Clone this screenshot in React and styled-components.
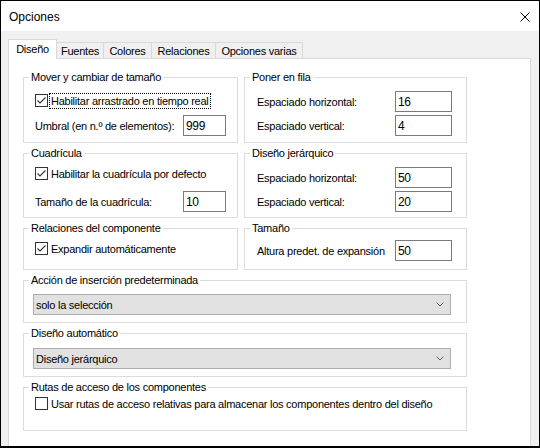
import React from "react";
import styled, { createGlobalStyle } from "styled-components";

const Global = createGlobalStyle`
  html, body { margin: 0; padding: 0; background: #ffffff; }
  body { font-family: "Liberation Sans", Arial, sans-serif; }
  * { box-sizing: border-box; }
`;

const Window = styled.div`
  width: 540px;
  height: 448px;
  border: 1px solid #000;
  border-bottom-width: 2px;
  display: flex;
  flex-direction: column;
  overflow: hidden;
  background: #f0f0f0;
  font-family: "Liberation Sans", Arial, sans-serif;
  font-size: 11px;
  letter-spacing: -0.25px;
  color: #000;
`;

const TitleBar = styled.div`
  height: 30px;
  flex: none;
  background: #fff;
  display: flex;
  align-items: center;
  justify-content: space-between;
  padding: 0 9px 0 8px;
`;

const Title = styled.span`
  font-size: 12px;
  letter-spacing: 0;
  padding-top: 1px;
`;

const CloseBtn = styled.span`
  width: 10px;
  height: 10px;
  display: flex;
  margin-top: 2px;
`;

const Body = styled.div`
  flex: 1;
  display: flex;
  flex-direction: column;
  padding: 8px 8px 0 7px;
  min-height: 0;
`;

const TabStrip = styled.div`
  display: flex;
  align-items: flex-end;
  height: 19px;
  flex: none;
`;

const Tab = styled.div`
  position: relative;
  width: ${(p) => p.$w}px;
  height: ${(p) => (p.$active ? 20 : 16)}px;
  margin-bottom: ${(p) => (p.$active ? -1 : 0)}px;
  z-index: ${(p) => (p.$active ? 1 : 0)};
  background: ${(p) => (p.$active ? "#fff" : "#f0f0f0")};
  border: 1px solid #d9d9d9;
  border-bottom: none;
  border-left: ${(p) => (p.$active ? "1px solid #d9d9d9" : "none")};
  display: flex;
  align-items: ${(p) => (p.$active ? "flex-start" : "center")};
  padding-top: ${(p) => (p.$active ? 3 : 0)}px;
  justify-content: center;
  white-space: nowrap;
`;

const Panel = styled.div`
  flex: 1;
  background: #fff;
  border: 1px solid #d9d9d9;
  border-bottom: none;
  padding: 12px 0 0 14px;
  display: flex;
  flex-direction: column;
  gap: 4px;
`;

const TwoCol = styled.div`
  display: grid;
  grid-template-columns: 215px 223px;
  grid-template-rows: 72px 71px 48px;
  column-gap: 6px;
  row-gap: 4px;
`;

const Group = styled.fieldset`
  margin: 0;
  padding: 0;
  min-width: 0;
  width: ${(p) => (p.$w ? `${p.$w}px` : "auto")};
  height: ${(p) => (p.$h ? `${p.$h}px` : "auto")};
  border: 1px solid #dcdcdc;
`;

const Legend = styled.legend`
  margin-left: 5px;
  padding: 0 2px;
  line-height: 13px;
  font-size: 11px;
`;

const Content = styled.div`
  display: flex;
  flex-direction: column;
  gap: ${(p) => p.$gap ?? 3}px;
  padding: ${(p) => p.$pt}px ${(p) => p.$pr}px 0 ${(p) => p.$pl}px;
`;

const FieldRow = styled.div`
  display: flex;
  align-items: center;
  justify-content: space-between;
  height: ${(p) => p.$h ?? 21}px;
`;

const Label = styled.span`
  white-space: nowrap;
`;

const TextBox = styled.div`
  width: ${(p) => p.$w}px;
  height: ${(p) => p.$h ?? 21}px;
  border: 1px solid #7a7a7a;
  background: #fff;
  padding: 0 2px;
  display: flex;
  align-items: center;
  font-size: 12px;
  letter-spacing: -0.3px;
`;

const CheckRow = styled.label`
  display: flex;
  align-items: center;
  gap: 2px;
  height: 13px;
  white-space: nowrap;
`;

const Box = styled.span`
  width: 13px;
  height: 13px;
  flex: none;
  border: 1px solid #333;
  background: #fff;
  display: flex;
  align-items: center;
  justify-content: center;
`;

const CheckText = styled.span`
  padding: 1px 1px;
  outline: ${(p) => (p.$focus ? "1px dotted #000" : "none")};
  outline-offset: 0;
`;

const Select = styled.div`
  height: ${(p) => p.$h ?? 21}px;
  width: 418px;
  background: #e1e1e1;
  border: 1px solid #adadad;
  display: flex;
  align-items: center;
  justify-content: space-between;
  padding: 0 6px 0 2px;
  font-size: 11px;
`;

const Check = ({ checked, focus, children }) => (
  <CheckRow>
    <Box>
      {checked && (
        <svg width="11" height="11" viewBox="0 0 11 11">
          <polyline points="1.5,5.5 4,8 9.5,2.5" fill="none" stroke="#333" strokeWidth="1.1" />
        </svg>
      )}
    </Box>
    <CheckText $focus={focus}>{children}</CheckText>
  </CheckRow>
);

const Chevron = () => (
  <svg width="8" height="5" viewBox="0 0 8 5">
    <polyline points="0.5,0.5 4,4 7.5,0.5" fill="none" stroke="#606060" strokeWidth="1" />
  </svg>
);

const tabs = [
  { t: "Diseño", w: 49, active: true },
  { t: "Fuentes", w: 47 },
  { t: "Colores", w: 48 },
  { t: "Relaciones", w: 64 },
  { t: "Opciones varias", w: 87 },
];

export default function App() {
  return (
    <>
      <Global />
      <Window>
        <TitleBar>
          <Title>Opciones</Title>
          <CloseBtn>
            <svg width="10" height="10" viewBox="0 0 10 10">
              <path d="M0.5 0.5 L9.5 9.5 M9.5 0.5 L0.5 9.5" stroke="#000" strokeWidth="1" />
            </svg>
          </CloseBtn>
        </TitleBar>
        <Body>
          <TabStrip>
            {tabs.map((tb) => (
              <Tab key={tb.t} $w={tb.w} $active={tb.active}>
                {tb.t}
              </Tab>
            ))}
          </TabStrip>
          <Panel>
            <TwoCol>
              <Group>
                <Legend>Mover y cambiar de tamaño</Legend>
                <Content $pt={10} $pl={11} $pr={11} $gap={8}>
                  <Check checked focus>
                    Habilitar arrastrado en tiempo real
                  </Check>
                  <FieldRow>
                    <Label>Umbral (en n.º de elementos):</Label>
                    <TextBox $w={43}>999</TextBox>
                  </FieldRow>
                </Content>
              </Group>
              <Group>
                <Legend>Poner en fila</Legend>
                <Content $pt={7} $pl={12} $pr={14} $gap={3}>
                  <FieldRow>
                    <Label>Espaciado horizontal:</Label>
                    <TextBox $w={57}>16</TextBox>
                  </FieldRow>
                  <FieldRow>
                    <Label>Espaciado vertical:</Label>
                    <TextBox $w={57}>4</TextBox>
                  </FieldRow>
                </Content>
              </Group>
              <Group>
                <Legend>Cuadrícula</Legend>
                <Content $pt={7} $pl={11} $pr={11} $gap={11}>
                  <Check checked>Habilitar la cuadrícula por defecto</Check>
                  <FieldRow>
                    <Label>Tamaño de la cuadrícula:</Label>
                    <TextBox $w={43}>10</TextBox>
                  </FieldRow>
                </Content>
              </Group>
              <Group>
                <Legend>Diseño jerárquico</Legend>
                <Content $pt={7} $pl={12} $pr={14} $gap={3}>
                  <FieldRow>
                    <Label>Espaciado horizontal:</Label>
                    <TextBox $w={57}>50</TextBox>
                  </FieldRow>
                  <FieldRow>
                    <Label>Espaciado vertical:</Label>
                    <TextBox $w={57}>20</TextBox>
                  </FieldRow>
                </Content>
              </Group>
              <Group>
                <Legend>Relaciones del componente</Legend>
                <Content $pt={7} $pl={11} $pr={11}>
                  <Check checked>Expandir automáticamente</Check>
                </Content>
              </Group>
              <Group>
                <Legend>Tamaño</Legend>
                <Content $pt={5} $pl={12} $pr={14}>
                  <FieldRow>
                    <Label>Altura predet. de expansión</Label>
                    <TextBox $w={57}>50</TextBox>
                  </FieldRow>
                </Content>
              </Group>
            </TwoCol>
            <Group $w={444} $h={49}>
              <Legend>Acción de inserción predeterminada</Legend>
              <Content $pt={7} $pl={9} $pr={14}>
                <Select>
                  <span>solo la selección</span>
                  <Chevron />
                </Select>
              </Content>
            </Group>
            <Group $w={444} $h={50}>
              <Legend>Diseño automático</Legend>
              <Content $pt={8} $pl={9} $pr={14}>
                <Select>
                  <span>Diseño jerárquico</span>
                  <Chevron />
                </Select>
              </Content>
            </Group>
            <Group $w={444} $h={50}>
              <Legend>Rutas de acceso de los componentes</Legend>
              <Content $pt={3} $pl={11} $pr={14}>
                <Check>Usar rutas de acceso relativas para almacenar los componentes dentro del diseño</Check>
              </Content>
            </Group>
          </Panel>
        </Body>
      </Window>
    </>
  );
}
